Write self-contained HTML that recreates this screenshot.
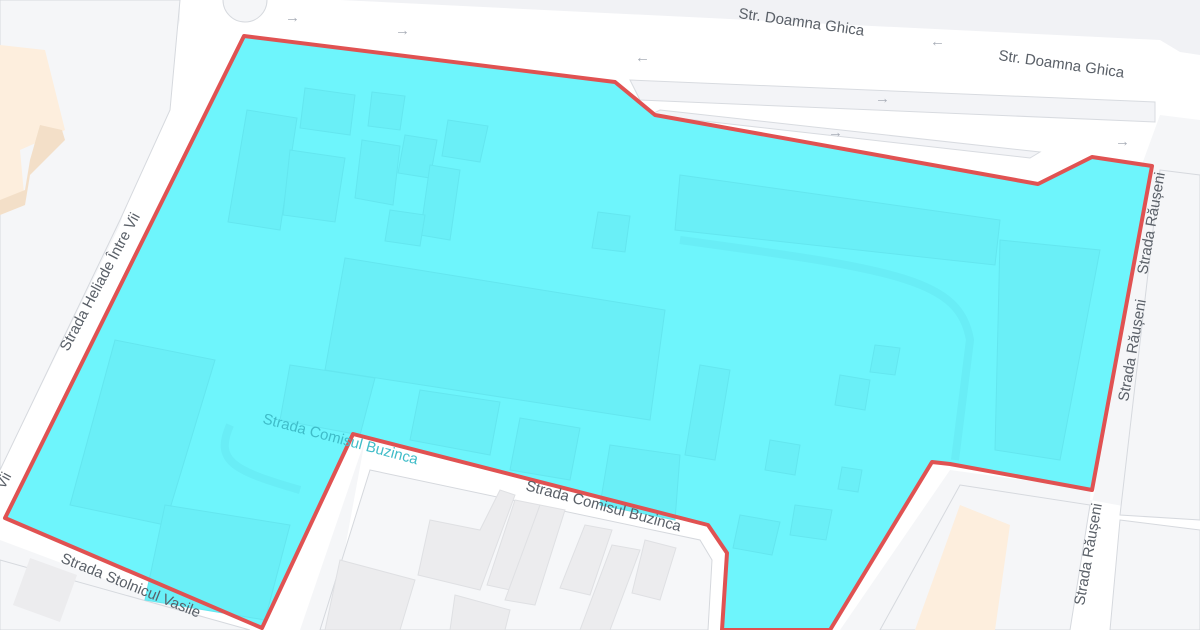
<!DOCTYPE html>
<html><head><meta charset="utf-8"><style>
html,body{margin:0;padding:0;width:1200px;height:630px;overflow:hidden;background:#f5f6f8}
svg{display:block}
text{font-family:"Liberation Sans",sans-serif;fill:#5a6068;font-size:15px}
</style></head><body>
<svg width="1200" height="630" viewBox="0 0 1200 630">
<rect width="1200" height="630" fill="#f5f6f8"/>
<polygon points="180,0 1200,0 1200,120 1160,115 1140,170 1110,160 1090,500 1200,520 1200,630 1060,630 1095,490 950,470 840,630 330,630 365,440 300,630 240,630 0,540 0,470 120,225 180,20" fill="#ffffff"/>
<polygon points="340,0 1200,0 1200,55 1180,52 1160,40" fill="#f1f2f5"/>
<polygon points="630,80 1155,102 1155,122 640,100" fill="#f3f4f7" stroke="#d8dbe0"/>
<polygon points="660,110 1040,152 1030,158 650,115" fill="#f3f4f7" stroke="#d8dbe0"/>
<polygon points="0,0 180,0 170,110 120,220 0,470" fill="#f5f6f8" stroke="#d6d9de"/>
<polygon points="0,45 45,50 65,130 20,150 25,205 0,215" fill="#fdeedd"/>
<polygon points="40,125 62,130 65,140 30,175 25,205 0,215 0,200 25,190 30,160" fill="#f3dfc8"/>
<polygon points="0,560 250,630 0,630" fill="#f5f6f8" stroke="#d6d9de"/>
<rect x="20" y="565" width="50" height="50" fill="#ececee" transform="rotate(20 45 590)"/>
<polygon points="370,470 700,540 712,560 708,630 320,630" fill="#f6f7f9" stroke="#d5d8dd"/>
<g fill="#ececee" stroke="#dfe0e3">
<polygon points="430,520 480,530 500,490 515,495 480,590 418,575"/>
<polygon points="515,500 540,505 510,590 487,585"/>
<polygon points="540,505 565,510 535,605 505,600"/>
<polygon points="585,525 612,530 590,595 560,588"/>
<polygon points="612,545 640,550 610,630 580,630"/>
<polygon points="645,540 676,548 660,600 632,593"/>
<polygon points="340,560 415,580 400,630 325,630"/>
<polygon points="455,595 510,610 505,630 450,630"/>
</g>
<polygon points="960,485 1090,505 1070,630 880,630" fill="#f5f6f8" stroke="#d6d9de"/>
<polygon points="960,505 1010,525 995,630 915,630" fill="#fdeedd"/>
<polygon points="1120,520 1200,530 1200,630 1110,630" fill="#f5f6f8" stroke="#d6d9de"/>
<polygon points="1160,170 1200,175 1200,520 1120,515" fill="#f5f6f8" stroke="#d6d9de"/>
<circle cx="245" cy="0" r="22" fill="#f5f6f8" stroke="#d6d9de"/>
<polygon points="244,36 615,82 655,115 1038,184 1092,157 1152,166 1092,490 950,464 932,462 830,630 722,630 727,553 708,525 353,434 262,628 5,518" fill="#6ef5fc"/>
<g fill="#6aeff7" stroke="#64e6ef" stroke-width="1">
<polygon points="247,110 297,118 280,230 228,222"/>
<polygon points="305,88 355,95 350,135 300,128"/>
<polygon points="290,150 345,158 335,222 283,215"/>
<polygon points="372,92 405,96 400,130 368,126"/>
<polygon points="362,140 400,146 393,205 355,198"/>
<polygon points="405,135 437,140 430,178 398,173"/>
<polygon points="448,120 488,126 480,162 442,156"/>
<polygon points="430,165 460,170 450,240 420,235"/>
<polygon points="390,210 425,215 420,246 385,241"/>
<polygon points="598,212 630,216 625,252 592,248"/>
<polygon points="345,258 665,310 650,420 325,370"/>
<polygon points="680,175 1000,220 995,265 675,230"/>
<polygon points="1000,240 1100,250 1060,460 995,450"/>
<polygon points="700,365 730,370 715,460 685,455"/>
<polygon points="115,340 215,360 165,525 70,505"/>
<polygon points="165,505 290,525 265,620 145,600"/>
<polygon points="290,365 375,378 360,435 280,420"/>
<polygon points="420,390 500,402 490,455 410,440"/>
<polygon points="520,418 580,428 570,480 510,470"/>
<polygon points="610,445 680,455 675,520 600,505"/>
<polygon points="770,440 800,445 795,475 765,470"/>
<polygon points="840,375 870,380 865,410 835,405"/>
<polygon points="875,345 900,348 895,375 870,372"/>
<polygon points="842,467 862,470 858,492 838,489"/>
<polygon points="740,515 780,522 772,555 733,548"/>
<polygon points="795,505 832,510 826,540 790,535"/>
</g>
<path d="M680,240 C900,270 960,280 970,340 L955,460" fill="none" stroke="#64e6ef" stroke-width="8" stroke-opacity="0.5"/>
<path d="M230,425 C215,460 230,470 300,490" fill="none" stroke="#64e6ef" stroke-width="8" stroke-opacity="0.5"/>
<polygon points="244,36 615,82 655,115 1038,184 1092,157 1152,166 1092,490 950,464 932,462 830,630 722,630 727,553 708,525 353,434 262,628 5,518" fill="none" stroke="#e05252" stroke-width="4" stroke-linejoin="round"/>
<text x="738" y="18" transform="rotate(8 738 18)">Str. Doamna Ghica</text>
<text x="998" y="60" transform="rotate(8 998 60)">Str. Doamna Ghica</text>
<text x="68" y="352" transform="rotate(-62 68 352)" font-size="14">Strada Heliade Între Vii</text>
<text x="4" y="490" transform="rotate(-62 4 490)" font-size="14">Vii</text>
<text x="262" y="423" transform="rotate(15 262 423)" font-size="14" style="fill:#3fbcc8">Strada Comisul Buzinca</text>
<text x="525" y="490" transform="rotate(15 525 490)" font-size="14">Strada Comisul Buzinca</text>
<text x="60" y="562" transform="rotate(22 60 562)" font-size="14">Strada Stolnicul Vasile</text>
<text x="1147" y="275" transform="rotate(-80 1147 275)" font-size="13">Strada Răușeni</text>
<text x="1128" y="402" transform="rotate(-80 1128 402)" font-size="13">Strada Răușeni</text>
<text x="1084" y="606" transform="rotate(-80 1084 606)" font-size="13">Strada Răușeni</text>
<g font-size="12">
<text x="285" y="22" style="fill:#a9aeb8">→</text><text x="395" y="35" style="fill:#a9aeb8">→</text>
<text x="875" y="103" style="fill:#a9aeb8">→</text><text x="828" y="137" style="fill:#a9aeb8">→</text>
<text x="1115" y="146" style="fill:#a9aeb8">→</text><text x="930" y="46" style="fill:#a9aeb8">←</text>
<text x="635" y="62" style="fill:#a9aeb8">←</text>
</g>
</svg>
</body></html>
